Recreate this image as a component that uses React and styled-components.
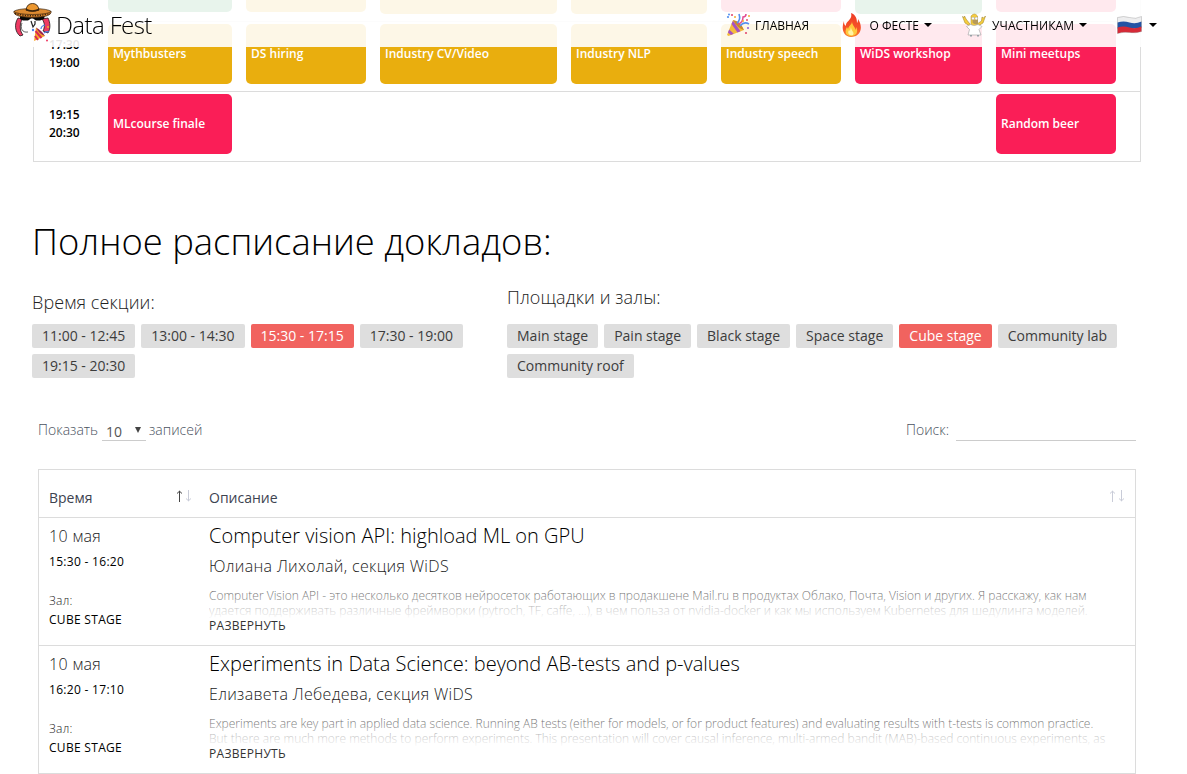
import React from "react";
import styled, { createGlobalStyle } from "styled-components";

const Global = createGlobalStyle`
  * { box-sizing: border-box; }
  html, body { margin: 0; padding: 0; background: #fff; overflow: hidden; }
  body { font-family: "Open Sans", "Noto Sans", sans-serif; color: #000; }
  h1, h2, h3, h4, p { margin: 0; font-weight: 300; }
  button, input { font-family: inherit; }
`;

const Page = styled.div`
  height: 774px;
  overflow: hidden;
  padding: 0 46px 0 33px;
`;

const Navbar = styled.header`
  position: fixed;
  top: 0;
  left: 0;
  right: 0;
  height: 47px;
  padding: 0 30px 0 13px;
  display: flex;
  justify-content: space-between;
  background: rgba(255, 255, 255, 0.9);
  z-index: 5;
`;

const Brand = styled.a`
  display: flex;
  align-items: flex-start;
  gap: 4px;
  padding-top: 2px;
  font-size: 24px;
  line-height: 45px;
  font-weight: 300;
  letter-spacing: -0.6px;
`;

const Menu = styled.nav`
  display: flex;
  align-items: center;
  height: 50px;
`;

const MenuItem = styled.a`
  display: flex;
  align-items: center;
  width: ${(p) => p.$w}px;
  font-size: 12px;
  white-space: nowrap;
`;

const MenuLabel = styled.span`
  margin-left: ${(p) => p.$gap || 5}px;
  letter-spacing: ${(p) => p.$track || 0}px;
`;

const Caret = styled.span`
  margin-left: ${(p) => p.$gap || 5}px;
  border: 4px solid transparent;
  border-top-color: #000;
  border-bottom: 0;
`;

const Schedule = styled.section`
  border: 1px solid #dcdcdc;
  border-top: 0;
  width: 1108px;
`;

const Slot = styled.div`
  display: grid;
  grid-template-columns: 60px 124px 120px 177px 136px 120px 127px 120px;
  column-gap: 14px;
  height: ${(p) => p.$h}px;
  align-items: start;
  border-top: ${(p) => (p.$cut ? "0" : "1px solid #dcdcdc")};
  padding-top: ${(p) => (p.$cut ? 0 : 2)}px;
`;

const SlotTime = styled.div`
  padding: 12px 0 0 15px;
  font-size: 12px;
  line-height: 18px;
  font-weight: 600;
`;

const tones = { green: "#199144", gold: "#e9ae0e", pink: "#fa1e57" };

const Block = styled.div`
  height: ${(p) => p.$h || 60}px;
  border-radius: ${(p) => (p.$h ? "0 0 5px 5px" : "5px")};
  background: ${(p) => tones[p.$tone] || "transparent"};
  color: #fff;
  padding-left: 5px;
  font-size: 12px;
  line-height: 60px;
  font-weight: 600;
  white-space: nowrap;
`;

const Title = styled.h1`
  margin: 51px 0 0 -1px;
  font-size: 36.4px;
  line-height: 56px;
`;

const Filters = styled.section`
  display: grid;
  grid-template-columns: 475px 640px;
  margin: 15px 0 0 -1px;
`;

const FilterTitle = styled.h3`
  font-size: 18px;
  line-height: 24px;
  letter-spacing: 0.1px;
  padding-top: ${(p) => p.$top}px;
  height: 40px;
  color: #222;
`;

const Chips = styled.div`
  display: flex;
  flex-wrap: wrap;
  gap: 6px;
  max-width: ${(p) => p.$max}px;
`;

const Chip = styled.button`
  border: 0;
  border-radius: 2px;
  height: 24px;
  line-height: 24px;
  padding: 0 10.04px;
  font-size: 14px;
  background: ${(p) => (p.$active ? "#f1635f" : "#dedede")};
  color: ${(p) => (p.$active ? "#fff" : "#3c3c3c")};
`;

const Controls = styled.div`
  display: flex;
  justify-content: space-between;
  height: 28px;
  width: 1098px;
  margin: 35px 0 28px 5px;
  font-size: 14px;
  line-height: 34px;
  font-weight: 300;
  color: #4a5260;
`;

const Control = styled.div`
  display: flex;
`;

const Select = styled.span`
  display: flex;
  justify-content: space-between;
  width: 44px;
  height: 28px;
  margin: 0 3px 0 4px;
  padding: 3px 5px 0 4px;
  border-bottom: 1px solid #ccc;
  line-height: 32px;
  font-weight: 400;
  color: #555;
`;

const SelectArrow = styled.i`
  border: 3px solid transparent;
  border-top: 6px solid #444;
  border-bottom: 0;
  height: 6px;
  margin-top: 11px;
`;

const Search = styled.input`
  width: 180px;
  height: 28px;
  margin-left: 7px;
  border: 0;
  border-bottom: 1px solid #ccc;
  background: transparent;
`;

const Table = styled.section`
  width: 1098px;
  margin-left: 5px;
  border: 1px solid #dcdcdc;
`;

const Head = styled.div`
  display: grid;
  grid-template-columns: 160px 1fr;
  height: 47px;
  padding: 0 10px;
  font-size: 14px;
  line-height: 56px;
  color: #3d4350;
`;

const HeadCell = styled.div`
  display: flex;
  justify-content: space-between;
  padding-right: ${(p) => p.$right}px;
`;

const Row = styled.article`
  display: grid;
  grid-template-columns: 160px 1fr;
  height: 128px;
  padding: 0 10px;
  border-top: 1px solid #dcdcdc;
`;

const Day = styled.p`
  font-size: 16px;
  line-height: 36px;
  letter-spacing: 0.33px;
  color: #222;
`;

const Small = styled.p`
  font-size: 12px;
  font-weight: ${(p) => (p.$light ? 300 : 400)};
  line-height: ${(p) => p.$lh}px;
  letter-spacing: 0.3px;
  margin-top: ${(p) => p.$top || 0}px;
  color: ${(p) => (p.$light ? "#222" : "#000")};
`;

const TalkTitle = styled.h2`
  font-size: 20px;
  line-height: 36px;
`;

const Speaker = styled.h4`
  font-size: 16px;
  line-height: 24px;
  letter-spacing: 0.32px;
  color: #222;
`;

const Abstract = styled.div`
  position: relative;
  height: 31px;
  margin-top: 10px;
  overflow: hidden;
  font-size: 12px;
  line-height: 15px;
  font-weight: 300;
  color: #555;
  white-space: nowrap;
  &::after {
    content: "";
    position: absolute;
    inset: 0;
    background: linear-gradient(rgba(255, 255, 255, 0), #fff);
  }
`;

const Expand = styled.a`
  display: block;
  margin-top: -1px;
  font-size: 12px;
  line-height: 15px;
  letter-spacing: 0.3px;
  color: #333;
`;

function Mascot() {
  return (
    <svg width="39" height="40" viewBox="0 0 39 40">
      <path d="M9 16c-2 5-1 12 5 15h12c4-4 6-10 5-15Z" fill="#fff" />
      <path d="M9 21c-2 5 0 10 6 9" fill="none" stroke="#555" strokeWidth=".9" />
      <path d="M5 16C1 22 2 30 7 34l3-1C6 28 7 22 9 17ZM29 17c3 4 3 8 1 12l5 2c3-5 2-11 0-15Z" fill="#ee3a63" stroke="#1b1b1b" strokeWidth=".8" />
      <path d="M18 19l2 6 2-3v-3" fill="none" stroke="#222" strokeWidth="1.200" />
      <path d="M7 13h25l-1 4-4 1.500h-4L20 16.500h-2l-3 2h-5L7 17Z" fill="#080808" />
      <path d="M1 9q-1 4 7 5.500 11 2 23 0 8-1.500 7-5.500-7 2-18.500 2T1 9Z" fill="#d9822b" stroke="#3c250e" strokeWidth=".8" />
      <ellipse cx="19.500" cy="9.500" rx="18" ry="3" fill="#dd8a31" stroke="#3c250e" strokeWidth=".7" />
      <path d="M2 11.500q17 4.500 35 0" fill="none" stroke="#3c250e" strokeWidth="1.400" strokeDasharray="1.200 1.300" />
      <path d="M13 8q1-6.500 6.500-6.500T26 8q-6 2.500-13 0Z" fill="#ec972f" stroke="#3c250e" strokeWidth=".9" />
      <path d="M13 7.500q6 3 13 0" fill="none" stroke="#3c250e" strokeWidth="1.400" />
      <path d="M23 25.500 32 34l-11 5Z" fill="#f7a72a" />
      <path d="M22.500 29l6 7M22 34l3 4" stroke="#d92951" strokeWidth="2" />
      <path d="M23 25.500q6 3 9 8.500-6-2-9-8.500" fill="#9d2551" />
      <path d="M28 27q0-3 4-4M31 31q2-2 5-1" fill="none" stroke="#4c7fe8" strokeWidth="1.200" />
      <circle cx="35" cy="25" r="1" fill="#f4ae2e" />
      <circle cx="34" cy="38.500" r="1" fill="#ee3a63" />
      <circle cx="20" cy="28" r="1.200" fill="#4c7fe8" />
    </svg>
  );
}

function Popper() {
  return (
    <svg width="24" height="24" viewBox="0 0 24 24">
      <path d="M7 7 1 22l1.500 1L18 17Q15 10 7 7Z" fill="#f5bd3b" />
      <path d="m5.500 11 6 8.500 3-1.200L7 7.800ZM3.200 16.500l4.500 4.300-2.800 1.300-3-2.600Z" fill="#a653c1" />
      <path d="M7 7q7 1 11 10-7-2-11-10" fill="#c98a2c" />
      <path d="M11 10q4-3 2-9M14 13q4-5 9-2" fill="none" stroke="#5590ef" strokeWidth="1.600" />
      <path d="M12 11q5-1 5-7 3 0 3-3" fill="none" stroke="#e34c91" strokeWidth="1.500" />
      <g fill="#e34c72"><circle cx="6" cy="2" r="1.100" /><circle cx="21" cy="7" r="1" /><circle cx="20" cy="20" r="1.100" /></g>
      <g fill="#5590ef"><circle cx="2" cy="4" r="1.100" /><circle cx="3" cy="1.500" r="1" /></g>
      <circle cx="22" cy="15" r="1.100" fill="#9861d9" />
      <g fill="#f3ac35"><circle cx="9" cy="4" r="1" /><circle cx="23" cy="3" r="1" /><circle cx="17" cy="8" r="1" /></g>
    </svg>
  );
}

function Fire() {
  return (
    <svg width="20" height="24" viewBox="0.500 0 19 24">
      <defs>
        <linearGradient id="flame" x1="0" y1="0" x2="0" y2="1">
          <stop offset="0" stopColor="#ee3b24" />
          <stop offset=".65" stopColor="#f6542a" />
          <stop offset="1" stopColor="#f9822a" />
        </linearGradient>
      </defs>
      <path d="M9 0c5 2 6 6 6 10 1-1 1-3 1-4 6 9 2 18-7 18C1 24-1 15 2 8c0 2 0 4 2 5C3 8 11 7 9 0Z" fill="url(#flame)" />
      <path d="M10 8c0 5 4 6 3 9 1-1 1-2 1-3 3 5 0 9-5 9s-7-4-4-9l1 2c1-4 4-4 4-8Z" fill="#ffc83d" />
      <path d="M9 14c0 4 4 5 2 8-4 1-6-2-4-5l1 1Z" fill="#fff4a5" />
    </svg>
  );
}

function Cheerer() {
  return (
    <svg width="24" height="24" viewBox="0 0 24 24">
      <path d="M8 13 3 10 .5 3.500 2 4.500 2.500 3l1.500 3 4 5ZM16 13l5-3 2.500-7-2 2-1.500-1-.500 4-4.500 3Z" fill="#f6cd3c" stroke="#a58a35" strokeWidth=".6" />
      <path d="M9 11V3q3.500-4 6.500 0v8l-2 2h-3Z" fill="#f6cd3c" stroke="#a58a35" strokeWidth=".5" />
      <path d="M10.500 7h5.500v3.500q-3.500 2-5.500-1Z" fill="#b79a59" />
      <circle cx="11" cy="5.500" r="1.400" fill="#fff" stroke="#888" strokeWidth=".4" /><circle cx="14.300" cy="5.500" r="1.400" fill="#fff" stroke="#888" strokeWidth=".4" />
      <path d="m8.500 11.500-4 2 3 3L6 22h13l-2-5.500 3-3-4-2q-4 2-7.500 0Z" fill="#fff" stroke="#aaa" strokeWidth=".7" />
      <path d="M8 22h2v1.500H8ZM15 22h2v1.500h-2Z" fill="#96a1a7" />
    </svg>
  );
}

function Flag() {
  return (
    <svg width="25" height="20" viewBox="0 0 25 20">
      <path d="M.5 2.500q6-2 12 0t12-1v6q-6 2-12 1t-12 0Z" fill="#eeeeef" />
      <path d="M.5 7.500q6-2 12 0t12-1v6q-6 2-12 1t-12 0Z" fill="#2353a4" />
      <path d="M.5 12.500q6-2 12 0t12-1V16.500q-6 2-12 1t-12 1Z" fill="#d62a37" />
      <path d="M.5 2.500q6-2 12 0t12-1v15q-6 2-12 1t-12 1Z" fill="none" stroke="#777" strokeOpacity=".5" strokeWidth=".6" />
    </svg>
  );
}

const SortBox = styled.svg`
  width: 16px;
  height: 12px;
  margin-top: 20px;
`;

function Sort({ active }) {
  return (
    <SortBox viewBox="0.500 0 16 12" fill="none">
      <path d="M4 12V1M1.500 3.500 4 1.200 6.500 3.500" stroke={active ? "#444" : "#c9ccd8"} />
      <path d="M13 0v11M10.500 8.500l2.500 2.300 2.500-2.300" stroke="#c9ccd8" />
    </SortBox>
  );
}

const slots = [
  { from: "17:30", to: "19:00", blocks: [["Mythbusters", "gold"], ["DS hiring", "gold"], ["Industry CV/Video", "gold"], ["Industry NLP", "gold"], ["Industry speech", "gold"], ["WiDS workshop", "pink"], ["Mini meetups", "pink"]] },
  { from: "19:15", to: "20:30", blocks: [["MLcourse finale", "pink"], [], [], [], [], [], ["Random beer", "pink"]] },
];
const earlier = [["green", 12], ["gold", 12], ["gold", 14], ["gold", 14], ["pink", 12], ["green", 14], ["pink", 12]];
const times = ["11:00 - 12:45", "13:00 - 14:30", "15:30 - 17:15", "17:30 - 19:00", "19:15 - 20:30"];
const stages = ["Main stage", "Pain stage", "Black stage", "Space stage", "Cube stage", "Community lab", "Community roof"];
const talks = [
  {
    time: "15:30 - 16:20",
    title: "Computer vision API: highload ML on GPU",
    speaker: "Юлиана Лихолай, секция WiDS",
    lines: [
      "Computer Vision API - это несколько десятков нейросеток работающих в продакшене Mail.ru в продуктах Облако, Почта, Vision и других. Я расскажу, как нам",
      "удается поддерживать различные фреймворки (pytroch, TF, caffe, ...), в чем польза от nvidia-docker и как мы используем Kubernetes для шедулинга моделей.",
    ],
  },
  {
    time: "16:20 - 17:10",
    title: "Experiments in Data Science: beyond AB-tests and p-values",
    speaker: "Елизавета Лебедева, секция WiDS",
    lines: [
      "Experiments are key part in applied data science. Running AB tests (either for models, or for product features) and evaluating results with t-tests is common practice.",
      "But there are much more methods to perform experiments. This presentation will cover causal inference, multi-armed bandit (MAB)-based continuous experiments, as",
    ],
  },
];

export default function App() {
  return (
    <>
      <Global />
      <Navbar>
        <Brand><Mascot />Data Fest</Brand>
        <Menu>
          <MenuItem $w={116}><Popper /><MenuLabel>ГЛАВНАЯ</MenuLabel></MenuItem>
          <MenuItem $w={120}><Fire /><MenuLabel $gap={7.5}>О ФЕСТЕ</MenuLabel><Caret /></MenuItem>
          <MenuItem $w={155}><Cheerer /><MenuLabel $gap={6} $track={0.1}>УЧАСТНИКАМ</MenuLabel><Caret /></MenuItem>
          <MenuItem $w={40}><Flag /><Caret $gap={7} /></MenuItem>
        </Menu>
      </Navbar>
      <Page>
        <Schedule>
          <Slot $cut $h={21}>
            <span />
            {earlier.map(([tone, h], i) => <Block key={i} $tone={tone} $h={h} />)}
          </Slot>
          {slots.map((s) => (
            <Slot key={s.from} $h={70}>
              <SlotTime>{s.from}<br />{s.to}</SlotTime>
              {s.blocks.map(([name, tone], i) => <Block key={i} $tone={tone}>{name}</Block>)}
            </Slot>
          ))}
        </Schedule>
        <Title>Полное расписание докладов:</Title>
        <Filters>
          <div>
            <FilterTitle $top={6}>Время секции:</FilterTitle>
            <Chips $max={450}>{times.map((t) => <Chip key={t} $active={t === "15:30 - 17:15"}>{t}</Chip>)}</Chips>
          </div>
          <div>
            <FilterTitle $top={1}>Площадки и залы:</FilterTitle>
            <Chips $max={630}>{stages.map((t) => <Chip key={t} $active={t === "Cube stage"}>{t}</Chip>)}</Chips>
          </div>
        </Filters>
        <Controls>
          <Control>Показать<Select>10<SelectArrow /></Select>записей</Control>
          <Control>Поиск:<Search aria-label="Поиск" /></Control>
        </Controls>
        <Table>
          <Head>
            <HeadCell $right={17}>Время<Sort active /></HeadCell>
            <HeadCell $right={0}>Описание<Sort /></HeadCell>
          </Head>
          {talks.map((t) => (
            <Row key={t.time}>
              <div>
                <Day>10 мая</Day>
                <Small $lh={16}>{t.time}</Small>
                <Small $light $top={21} $lh={19}>Зал:</Small>
                <Small $lh={19}>CUBE STAGE</Small>
              </div>
              <div>
                <TalkTitle>{t.title}</TalkTitle>
                <Speaker>{t.speaker}</Speaker>
                <Abstract>{t.lines.map((l) => <div key={l}>{l}</div>)}</Abstract>
                <Expand>РАЗВЕРНУТЬ</Expand>
              </div>
            </Row>
          ))}
        </Table>
      </Page>
    </>
  );
}
